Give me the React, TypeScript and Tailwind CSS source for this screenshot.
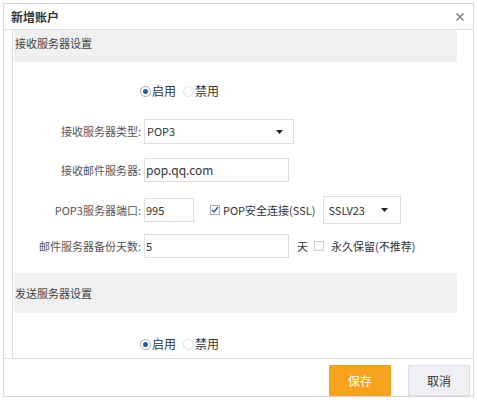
import React from "react";

const Radio = ({ on }: { on?: boolean }) => (
  <span className={`inline-flex w-[11px] h-[11px] rounded-full border items-center justify-center ${on ? "border-[#9ab]" : "border-[#ddd]"} bg-white`}>
    {on && <span className="w-[5px] h-[5px] rounded-full bg-[#2a5caa]" />}
  </span>
);

const Arrow = () => (
  <svg width="7" height="4" viewBox="0 0 7 4"><path d="M0 0h7L3.5 4z" fill="#222" /></svg>
);

function RadioRow() {
  return (
    <div className="flex items-center pl-[139px] text-[12px] text-[#333] gap-[1px]">
      <Radio on /><span className="mr-[6px]">启用</span><Radio /><span>禁用</span>
    </div>
  );
}

function Label({ children }: { children: React.ReactNode }) {
  return <div className="w-[143px] shrink-0 text-right pr-[3px] text-[11px] text-[#555]">{children}</div>;
}

export default function App() {
  return (
    <div className="w-[477px] h-[400px] bg-white" style={{ fontFamily: '"Noto Sans CJK SC", "Liberation Sans", sans-serif' }}>
      <div className="mx-[3px] mt-[3px] h-[394px] border border-[#d6d6d6] flex flex-col">
        <div className="h-[26px] flex items-center justify-between px-[7px] border-b border-[#ddd]">
          <span className="text-[12px] font-bold text-[#333]">新增账户</span>
          <span className="text-[12px] text-[#777] font-bold">×</span>
        </div>
        <div className="flex-1 ml-[8px] border-l border-[#ddd] flex flex-col">
          <div className="ml-[1px] mr-[16px] h-[32px] bg-[#f0f0f0] text-[11px] text-[#444] pl-[1px] pt-[5px]">接收服务器设置</div>
          <div className="mt-[20px] -ml-[12px]"><RadioRow /></div>
          <div className="-ml-[12px] mt-[19px] flex flex-col gap-[14px]">
            <div className="flex items-center">
              <Label>接收服务器类型:</Label>
              <div className="w-[150px] h-[25px] border border-[#ddd] flex items-center justify-between px-[2px] pr-[10px] text-[11px] text-[#333]">POP3<Arrow /></div>
            </div>
            <div className="flex items-center">
              <Label>接收邮件服务器:</Label>
              <div className="w-[145px] h-[24px] border border-[#ddd] flex items-center px-[1px] text-[12px] text-[#333]">pop.qq.com</div>
            </div>
            <div className="flex items-center">
              <Label>POP3服务器端口:</Label>
              <div className="w-[50px] h-[24px] border border-[#ddd] flex items-center px-[1px] text-[11px] text-[#333]">995</div>
              <span className="ml-[16px] w-[10px] h-[10px] border border-[#aaa] flex items-center justify-center">
                <svg width="8" height="8" viewBox="0 0 8 8"><path d="M1 4l2 2 4-5" stroke="#2a5caa" strokeWidth="1.5" fill="none" /></svg>
              </span>
              <span className="ml-[3px] text-[11px] text-[#333]">POP安全连接(SSL)</span>
              <div className="ml-[8px] w-[78px] h-[28px] border border-[#ddd] flex items-center justify-between px-[4px] pr-[12px] text-[11px] text-[#333]">SSLV23<Arrow /></div>
            </div>
            <div className="flex items-center -mt-[4px]">
              <Label>邮件服务器备份天数:</Label>
              <div className="w-[145px] h-[24px] border border-[#ddd] flex items-center px-[1px] text-[11px] text-[#333]">5</div>
              <span className="ml-[8px] text-[11px] text-[#333]">天</span>
              <span className="ml-[6px] w-[10px] h-[10px] border border-[#ccc]" />
              <span className="ml-[7px] text-[11px] text-[#333]">永久保留(不推荐)</span>
            </div>
          </div>
          <div className="mt-[15px] ml-[1px] mr-[16px] h-[40px] bg-[#f0f0f0] text-[11px] text-[#444] flex items-center pl-[1px]">发送服务器设置</div>
          <div className="mt-[22px] -ml-[12px]"><RadioRow /></div>
        </div>
        <div className="-mx-[1px] border-t border-[#ddd] h-[38px] flex items-start justify-end pr-[4px] pt-[6px] gap-[17px]">
          <div className="w-[62px] h-[31px] bg-[#f5a21c] text-white text-[12px] flex items-center justify-center">保存</div>
          <div className="w-[62px] h-[31px] bg-[#eef0f3] border border-[#dde] text-[#333] text-[12px] flex items-center justify-center">取消</div>
        </div>
      </div>
    </div>
  );
}
